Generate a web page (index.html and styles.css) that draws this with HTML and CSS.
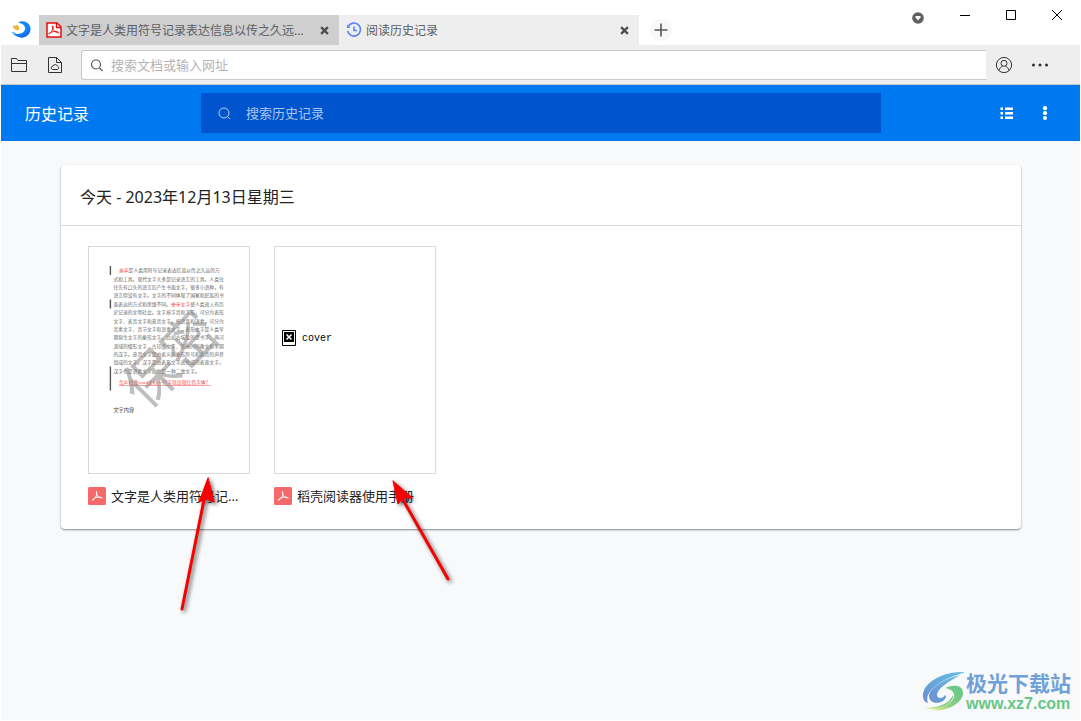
FILE: index.html
```html
<!DOCTYPE html>
<html lang="zh-CN">
<head>
<meta charset="utf-8">
<title>阅读历史记录</title>
<link rel="stylesheet" href="styles.css">
</head>
<body>
<div class="window">
  <header class="titlebar">
    <svg class="logo" viewBox="0 0 20 20" aria-hidden="true">
      <path d="M7 2.500C11 0 17 1.500 19 6c2 6-2 11.500-8 11.500-4 0-8-2.500-9.500-4 5 1 8.500.5 11-1.500 2.500-2.500 2-6-.5-7.500-2-1.200-3-1.500-5-2z" fill="#1485fb"/>
      <path d="M5 14.500c5 1 10 0 14-6.500 0 6-4 9.500-8 9.500-3 0-5-1.500-6-3z" fill="#1a6ee9"/>
      <path d="M2 5l3 1 .5-1.500L7.500 6l1 3-2 1.500-3-1.500-2-2h1z" fill="#edb73e"/>
      <path d="M0 12l4 .5 1 1.500-3-.5z" fill="#4fb4ff"/>
    </svg>
    <nav class="tabs" aria-label="标签页">
      <div class="tab tab-inactive">
        <svg class="tab-icon" viewBox="0 0 16 16" aria-hidden="true">
          <path d="M1 1h10l4 4v10H1z" fill="#fff" stroke="#e80c0c" stroke-width="1.500"/>
          <path d="M10.500 1v4.500H15" fill="none" stroke="#e80c0c" stroke-width="1.300"/>
          <path d="M6.500 4c1.200 0 .8 2.500-.8 5.200-1 1.600-2.300 3.300-2.900 2.800C2.700 11 6 9.700 8.800 9.500s4.200.5 3.800 1.200c-1 .8-4.500-1.200-5.700-3.900C6.300 5.300 6.100 4 6.500 4z" fill="none" stroke="#e80c0c"/>
        </svg>
        <a class="tab-title" href="#doc">文字是人类用符号记录表达信息以传之久远...</a>
        <button class="tab-close" aria-label="关闭标签"><svg viewBox="0 0 8 8"><path d="M1 1l6 6M7 1L1 7"/></svg></button>
      </div>
      <div class="tab">
        <svg class="tab-icon" viewBox="0 0 16 16" aria-hidden="true" fill="none" stroke="#5b86f3" stroke-width="1.600">
          <path d="M2.200 4.500A6.500 6.500 0 1 1 1.600 9"/>
          <path d="M8 4.500V8.500h3"/>
          <path d="M1 2.500v3.500h3.500z" fill="#5b86f3" stroke="none"/>
        </svg>
        <a class="tab-title" href="#history">阅读历史记录</a>
        <button class="tab-close" aria-label="关闭标签"><svg viewBox="0 0 8 8"><path d="M1 1l6 6M7 1L1 7"/></svg></button>
      </div>
    </nav>
    <button class="new-tab" aria-label="新建标签"><svg viewBox="0 0 14 14"><path d="M7 .5v13M.5 7h13"/></svg></button>
    <div class="window-controls">
      <button class="drop-button" aria-label="标签列表"><svg viewBox="0 0 12 12"><circle cx="6" cy="6" r="5.800" fill="#5f5f5f"/><path d="M3.500 4h5v1.500L6 8.500 3.500 5.500z" fill="#fff"/></svg></button>
      <button class="control" aria-label="最小化"><svg viewBox="0 0 12 12"><path d="M1 6.500h10"/></svg></button>
      <button class="control" aria-label="最大化"><svg viewBox="0 0 12 12"><path d="M1.500 1.500h9v9h-9z"/></svg></button>
      <button class="control" aria-label="关闭"><svg viewBox="0 0 12 12"><path d="M1 1l10 10M11 1L1 11"/></svg></button>
    </div>
  </header>

  <div class="toolbar">
    <button class="tool" aria-label="打开文件夹"><svg viewBox="0 0 18 18"><path d="M1.500 15.500v-13h5l1.500 2h8.500v11zM1.500 7.500h15"/></svg></button>
    <button class="tool" aria-label="云文档"><svg viewBox="0 0 18 18"><path d="M2.500 1.500h8l5 5v10h-13zM10.500 1.500v5h5"/><path d="M6.500 13.500h5a2 2 0 0 0 0-3.500 2.500 2.500 0 0 0-4.500 0 1.800 1.800 0 0 0-.5 3.500z"/></svg></button>
    <div class="address">
      <svg class="address-icon" viewBox="0 0 14 14" aria-hidden="true"><circle cx="6" cy="6.500" r="4.500"/><path d="M9.500 10L12.500 13"/></svg>
      <input class="address-input" type="text" aria-label="搜索文档或输入网址" placeholder="搜索文档或输入网址">
    </div>
    <button class="tool" aria-label="账户"><svg viewBox="0 0 18 18"><circle cx="9" cy="9" r="7.600"/><circle cx="9" cy="7.300" r="3"/><path d="M3.800 14.500c.8-2.500 2.500-3.800 3.700-4.300M14.200 14.500c-.8-2.500-2.500-3.800-3.700-4.300"/></svg></button>
    <button class="tool" aria-label="更多"><svg viewBox="0 0 18 18"><g fill="#333" stroke="none"><circle cx="2.500" cy="9" r="1.500"/><circle cx="9" cy="9" r="1.500"/><circle cx="15.500" cy="9" r="1.500"/></g></svg></button>
  </div>

  <div class="history-bar">
    <h1 class="history-title">历史记录</h1>
    <div class="history-search">
      <svg class="history-search-icon" viewBox="0 0 14 14" aria-hidden="true"><circle cx="7" cy="7" r="5"/><path d="M10.500 10.500l2.500 2.500"/></svg>
      <input class="history-input" type="text" aria-label="搜索历史记录" placeholder="搜索历史记录">
    </div>
    <div class="history-actions">
      <button class="action" aria-label="列表视图"><svg viewBox="0 0 14 14"><path d="M.500 1.500h2.500v2.500h-2.500zM5 1.500h8v2.500H5zM.500 6h2.500v2.500h-2.500zM5 6h8v2.500H5zM.500 10.500h2.500v2.500h-2.500zM5 10.500h8v2.500H5z"/></svg></button>
      <button class="action" aria-label="菜单"><svg viewBox="0 0 14 14"><circle cx="7" cy="2.200" r="2.100"/><circle cx="7" cy="7.200" r="2.100"/><circle cx="7" cy="12" r="2"/></svg></button>
    </div>
  </div>

  <main class="content" id="history">
    <section class="card">
      <h2 class="card-title">今天 - 2023年12月13日星期三</h2>
      <div class="documents">
        <a class="document" id="doc" href="#doc">
          <div class="cover">
            <svg class="page" viewBox="0 0 800 1130" aria-hidden="true">
              <g class="page-text">
                <text x="150" y="127"><tspan class="page-red page-struck">文字</tspan>是人类用符号记录表达信息以传之久远的方</text>
                <text x="122" y="169">式和工具。现代文字大多是记录语言的工具。人类往</text>
                <text x="122" y="210">往先有口头的语言后产生书面文字，很多小语种，有</text>
                <text x="122" y="252">语言但没有文字。文字的不同体现了国家和民族的书</text>
                <text x="122" y="294">面表达的方式和思维不同。<tspan class="page-red"><tspan class="page-struck">文字</tspan>文字</tspan>使人类进入有历</text>
                <text x="122" y="336">史记录的文明社会。文字按字音和字形，可分为表形</text>
                <text x="122" y="378">文字、表音文字和意音文字。按语音和语素，可分为</text>
                <text x="122" y="420">音素文字、音节文字和语素文字。表形文字是人类早</text>
                <text x="122" y="462">期原生文字的象形文字，比如古埃及的圣书字、两河</text>
                <text x="122" y="504">流域的楔形文字、古印度文字、美洲的玛雅文和早期</text>
                <text x="122" y="546">的汉字。意音文字是由表义的象形符号和表音的声旁</text>
                <text x="122" y="587">组成的文字，汉字是由表形文字进化成的表意文字，</text>
                <text x="122" y="629">汉字也是语素文字，也是一种二维文字。</text>
                <text x="150" y="687" class="page-red page-underlined">怎么修改word文档一打字就出现红色字体？</text>
                <text x="122" y="827" class="page-heading">文字内容</text>
              </g>
              <path class="page-marks" d="M107 95v45M107 262v45M107 597v120"/>
              <text class="watermark" x="405" y="660" text-anchor="middle" transform="rotate(-45 405 560)">保密</text>
            </svg>
          </div>
          <span class="document-label">
            <svg class="file-icon" viewBox="0 0 18 18" aria-hidden="true"><rect width="18" height="18" rx="1.500" fill="#f7686b"/><path d="M8.500 4.500c.8 1.500.3 3.800-1 5.800-.8 1.300-2 2.700-3.200 3 .5-1.600 3-2.700 5-3s4.200-.2 5 .6c-1.500.2-3.800-.7-5.200-2.400C8.500 7.500 8.200 6 8.500 4.500z" fill="none" stroke="#fff"/></svg>
            <span class="document-name">文字是人类用符号记...</span>
          </span>
        </a>
        <a class="document" href="#manual">
          <div class="cover cover-missing">
            <svg class="missing-icon" viewBox="0 0 14 16" aria-hidden="true"><path d="M.5.500h13v15H.5z" fill="#fff" stroke="#000"/><path d="M2 2h10v10H2z"/><path d="M4.500 4.500l5 5M9.500 4.500l-5 5" stroke="#fff" stroke-width="1.600"/></svg>
            <span>cover</span>
          </div>
          <span class="document-label">
            <svg class="file-icon" viewBox="0 0 18 18" aria-hidden="true"><rect width="18" height="18" rx="1.500" fill="#f7686b"/><path d="M8.500 4.500c.8 1.500.3 3.800-1 5.800-.8 1.300-2 2.700-3.200 3 .5-1.600 3-2.700 5-3s4.200-.2 5 .6c-1.500.2-3.800-.7-5.200-2.400C8.500 7.500 8.200 6 8.500 4.500z" fill="none" stroke="#fff"/></svg>
            <span class="document-name">稻壳阅读器使用手册</span>
          </span>
        </a>
        <svg class="arrows" viewBox="0 0 300 150" aria-hidden="true">
          <g class="arrow-shape">
            <path d="M45 24L20 148" stroke-width="3"/>
            <path d="M46 17L37 41l7-3 8 3z"/>
            <path d="M236 30L286 118" stroke-width="3"/>
            <path d="M231 20L236 43l5-6 9 0z"/>
          </g>
        </svg>
      </div>
    </section>
  </main>

  <aside class="brand">
    <svg class="brand-mark" viewBox="0 0 44 42" aria-hidden="true">
      <defs>
        <linearGradient id="sky" x1="0" y1="1" x2="1" y2="0"><stop offset="0" stop-color="#6b8fce"/><stop offset="1" stop-color="#62bfe8"/></linearGradient>
        <linearGradient id="leaf" x1="1" y1="0" x2="0" y2="1"><stop offset="0" stop-color="#5bc58b"/><stop offset=".6" stop-color="#8dcf85"/><stop offset="1" stop-color="#e9ec6c"/></linearGradient>
      </defs>
      <path d="M43 1C29 0 11 5 3 17-1 25 1 31 6 32 3 25 9 17 19 11 27 6 35 4 43 1z" fill="url(#sky)"/>
      <path d="M38 4C24 7 8 16 7 25c0 6 7 9 14 5 3-2 4-5 2-6-2 4-8 4-8 0C15 17 28 10 38 4z" fill="url(#sky)"/>
      <path d="M23 17c9-4 18-3 18 5 0 10-16 19-31 17 9-1 20-6 22-13 1-5-3-8-9-9z" fill="url(#leaf)"/>
      <path d="M3 37c14 0 25-5 28-13 1 7-12 17-28 13z" fill="url(#leaf)"/>
    </svg>
    <div class="brand-text">
      <span class="brand-name">极光下载站</span>
      <a class="brand-url" href="#site">www.xz7.com</a>
    </div>
  </aside>
</div>
</body>
</html>
```

FILE: styles.css
```css
* {
  box-sizing: border-box;
}

body {
  margin: 0;
  background: #fff;
  color: #222;
  font-family: "Noto Sans", "Noto Sans CJK SC", sans-serif;
  font-size: 13px;
}

a {
  color: inherit;
  text-decoration: none;
}

button {
  display: flex;
  align-items: center;
  justify-content: center;
  flex: none;
  padding: 0;
  border: 0;
  background: none;
}

input {
  flex: 1;
  min-width: 0;
  height: 100%;
  padding: 0;
  border: 0;
  outline: 0;
  background: none;
  font: inherit;
}

svg {
  flex: none;
}

.window {
  position: relative;
  display: flex;
  flex-direction: column;
  min-height: 100vh;
  padding: 0 1px 1px;
}

.titlebar {
  display: flex;
  height: 45px;
  align-items: flex-end;
}

.logo {
  width: 20px;
  height: 20px;
  margin: 0 8px 5px 10px;
}

.tabs {
  display: flex;
  flex: 0 1 600px;
  min-width: 0;
}

.tab {
  display: flex;
  flex: 1;
  min-width: 0;
  height: 30px;
  align-items: center;
  padding: 0 10px 0 7px;
  background: #eee;
  color: #5c6064;
  font-size: 12px;
}

.tab-inactive {
  background: #cfcfcf;
}

.tab-icon {
  width: 16px;
  height: 16px;
  margin-right: 4px;
}

.tab-title {
  flex: 1;
  overflow: hidden;
  white-space: nowrap;
}

.tab-close {
  width: 10px;
  height: 16px;
}

.tab-close svg {
  width: 9px;
  height: 9px;
  stroke: #4c4c4c;
  stroke-width: 2;
}

.new-tab {
  width: 22px;
  height: 22px;
  margin: 0 0 4px 11px;
  border-radius: 50%;
  background: #f8f8f8;
}

.new-tab svg {
  width: 14px;
  height: 14px;
  stroke: #555;
  stroke-width: 1.6;
}

.window-controls {
  display: flex;
  align-self: flex-start;
  margin-left: auto;
}

.drop-button {
  width: 12px;
  height: 36px;
  margin-right: 18px;
}

.drop-button svg {
  width: 12px;
  height: 12px;
}

.control {
  width: 46px;
  height: 30px;
}

.control svg {
  width: 12px;
  height: 12px;
  fill: none;
  stroke: #000;
}

.toolbar {
  display: flex;
  height: 40px;
  align-items: center;
  gap: 18px;
  padding: 0 31px 0 9px;
  border-bottom: 1px solid #c3c6c8;
  background: #eee;
}

.tool {
  width: 18px;
  height: 18px;
}

.tool svg {
  width: 18px;
  height: 18px;
  fill: none;
  stroke: #333;
}

.address {
  display: flex;
  flex: 1;
  height: 30px;
  align-items: center;
  margin: 0 -9px 0 -1px;
  padding: 0 8px;
  border: 1px solid #c8c8c8;
  border-right: 0;
  border-radius: 3px 0 0 3px;
  background: #fff;
}

.address-icon {
  width: 14px;
  height: 14px;
  margin-right: 7px;
  fill: none;
  stroke: #555;
  stroke-width: 1.2;
}

.address-input::placeholder {
  color: #b4b4b4;
}

.history-bar {
  display: flex;
  height: 56px;
  align-items: center;
  padding: 0 28px 0 24px;
  background: #0078f0;
  color: #fff;
}

.history-title {
  flex: 0 0 176px;
  margin: 0;
  font-size: 16px;
  font-weight: 400;
}

.history-search {
  display: flex;
  flex: 0 1 680px;
  height: 40px;
  align-items: center;
  padding: 0 16px;
  background: #0055cf;
}

.history-search-icon {
  width: 14px;
  height: 14px;
  margin-right: 15px;
  fill: none;
  stroke: #b9cfee;
}

.history-input::placeholder {
  color: #a9c4eb;
}

.history-actions {
  display: flex;
  gap: 24px;
  margin-left: auto;
}

.action,
.action svg {
  width: 14px;
  height: 14px;
  fill: #fff;
}

.content {
  flex: 1;
  padding: 24px 59px 24px 60px;
  background: #f7f9fb;
}

.card {
  border-radius: 4px;
  background: #fff;
  box-shadow: 0 1px 2px rgba(0, 0, 0, 0.45);
}

.card-title {
  margin: 0;
  padding: 20px 19px 16px;
  border-bottom: 1px solid #d9d9d9;
  font-size: 16px;
  font-weight: 400;
  line-height: 24px;
}

.documents {
  position: relative;
  display: flex;
  gap: 24px;
  padding: 20px 27px 22px;
}

.document {
  display: block;
  width: 162px;
}

.cover {
  height: 228px;
  border: 1px solid #d9d9d9;
}

.page {
  display: block;
  width: 160px;
  height: 226px;
}

.page-text {
  fill: #666;
  font-family: "Liberation Serif", "Noto Sans CJK SC", serif;
  font-size: 24px;
}

.page-red {
  fill: #fa3c3c;
}

.page-struck {
  text-decoration: line-through;
}

.page-underlined {
  text-decoration: underline;
}

.page-heading {
  fill: #444;
  font-size: 26px;
}

.page-marks {
  stroke: #555;
  stroke-width: 7;
}

.watermark {
  fill: #888;
  fill-opacity: 0.55;
  font-family: "Noto Sans CJK SC", sans-serif;
  font-size: 270px;
  font-weight: 400;
}

.cover-missing {
  display: flex;
  align-items: center;
  gap: 6px;
  padding: 0 7px 44px;
  color: #000;
  font-family: "Liberation Mono", monospace;
  font-size: 10px;
}

.missing-icon {
  width: 14px;
  height: 16px;
}

.document-label {
  display: flex;
  align-items: center;
  gap: 5px;
  margin-top: 11px;
  white-space: nowrap;
}

.file-icon {
  width: 18px;
  height: 18px;
}

.document-name {
  line-height: 22px;
}

.arrows {
  position: absolute;
  top: 235px;
  left: 101px;
  width: 300px;
  height: 150px;
  overflow: visible;
  pointer-events: none;
}

.arrow-shape {
  fill: #f60000;
  stroke: #f60000;
  stroke-linecap: round;
  filter: drop-shadow(2px 2px 2px rgba(0, 0, 0, 0.6));
}

.brand {
  position: absolute;
  right: 10px;
  bottom: 7px;
  display: flex;
  align-items: center;
}

.brand-mark {
  width: 44px;
  height: 42px;
}

.brand-text {
  display: flex;
  flex-direction: column;
}

.brand-name {
  color: #6fa0d8;
  font-family: "Noto Sans CJK SC", sans-serif;
  font-size: 21px;
  font-weight: 700;
  line-height: 24px;
}

.brand-url {
  color: #67c787;
  font-family: "Liberation Sans", sans-serif;
  font-size: 16px;
  font-weight: 700;
  line-height: 20px;
}
```
